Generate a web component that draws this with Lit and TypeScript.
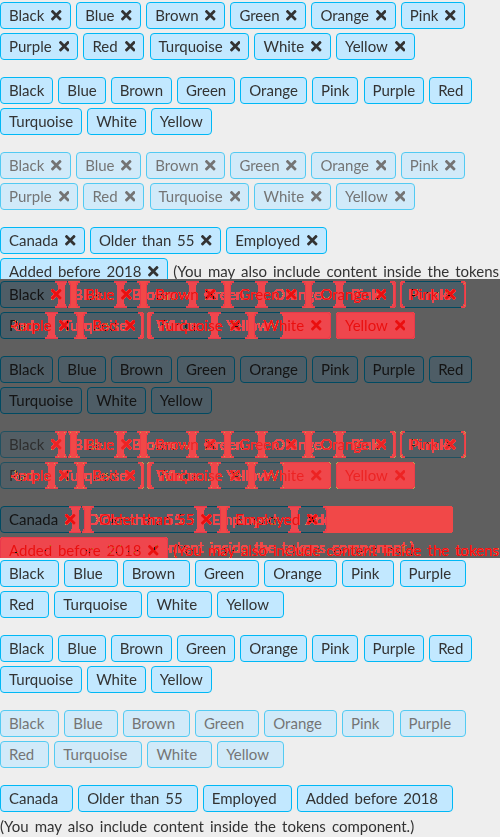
import { LitElement, html, css } from 'lit';
import { customElement } from 'lit/decorators.js';

const COLORS = ['Black', 'Blue', 'Brown', 'Green', 'Orange', 'Pink', 'Purple', 'Red', 'Turquoise', 'White', 'Yellow'];
const FILTERS = ['Canada', 'Older than 55', 'Employed', 'Added before 2018'];
const NOTE = '(You may also include content inside the tokens component.)';

const closeIcon = html`<svg class="close" viewBox="0 80 352 352" aria-hidden="true"><path d="M242.72 256l100.07-100.07c12.28-12.28 12.28-32.19 0-44.48l-22.24-22.24c-12.28-12.28-32.19-12.28-44.48 0L176 189.28 75.93 89.21c-12.28-12.28-32.19-12.28-44.48 0L9.21 111.45c-12.28 12.28-12.28 32.19 0 44.48L109.28 256 9.21 356.07c-12.28 12.28-12.28 32.19 0 44.48l22.24 22.24c12.28 12.28 32.2 12.28 44.48 0L176 322.72l100.07 100.07c12.28 12.28 32.2 12.28 44.48 0l22.24-22.24c12.28-12.28 12.28-32.19 0-44.48L242.72 256z"/></svg>`;

@customElement('app-root')
export class AppRoot extends LitElement {
   static styles = css`
   :host {
      display: block;
      width: 500px;
      background: #eeeeee;
      color: #333333;
      font-family: 'Lato', 'Liberation Sans', sans-serif;
      font-size: 15px;
   }
   .panel {
      position: relative;
      height: 279px;
      overflow: hidden;
      background: #eeeeee;
   }
   .group {
      line-height: 25px;
      margin-bottom: 13px;
   }
   .token {
      display: inline-block;
      margin: 2px 1.2px 2px 0;
      padding: 0 8px;
      border: 1px solid #00b8f5;
      border-radius: 4px;
      background: #c2e8ff;
      white-space: nowrap;
      word-spacing: 2px;
   }
   .disabled .token {
      opacity: 0.65;
   }
   .close {
      display: inline-block;
      width: 10.5px;
      height: 10.5px;
      margin-left: 6.9px;
      margin-right: 0.4px;
      fill: #333333;
      vertical-align: 0.2px;
   }
   .spacer {
      display: inline-block;
      width: 6px;
   }
   .note {
      word-spacing: 2.2px;
   }
   .note.own-line {
      display: block;
   }
   .dim {
      position: absolute;
      inset: 0;
      background: rgba(0, 0, 0, 0.6);
   }
   .mask {
      position: absolute;
      inset: 0;
      filter: url(#pixel-diff);
      mix-blend-mode: hard-light;
   }
   .sheet {
      position: absolute;
      inset: 0;
      overflow: hidden;
      background: #eeeeee;
   }
   .sheet.over {
      mix-blend-mode: difference;
   }
   .defs {
      position: absolute;
      width: 0;
      height: 0;
   }
`;

   private token(label: string, removable: boolean) {
      return html`<span class="token">${label}${removable ? closeIcon : ''}</span> `;
   }

   private spacedToken(label: string, removable: boolean) {
      return html`<span class="token">${label}${removable ? html`<span class="spacer"></span>` : ''}</span> `;
   }

   private before() {
      return html`
         <div class="group">${COLORS.map((c) => this.token(c, true))}</div>
         <div class="group">${COLORS.map((c) => this.token(c, false))}</div>
         <div class="group disabled">${COLORS.map((c) => this.token(c, true))}</div>
         <div class="group">${FILTERS.map((c) => this.token(c, true))}<span class="note">${NOTE}</span></div>
      `;
   }

   private after() {
      return html`
         <div class="group">${COLORS.map((c) => this.spacedToken(c, true))}</div>
         <div class="group">${COLORS.map((c) => this.spacedToken(c, false))}</div>
         <div class="group disabled">${COLORS.map((c) => this.spacedToken(c, true))}</div>
         <div class="group">${FILTERS.map((c) => this.spacedToken(c, true))}<span class="note own-line">${NOTE}</span></div>
      `;
   }

   render() {
      return html`
         <svg class="defs" aria-hidden="true">
            <filter id="pixel-diff" x="0" y="0" width="100%" height="100%" color-interpolation-filters="sRGB">
               <feColorMatrix type="matrix" values="1 1 1 0 0  1 1 1 0 0  1 1 1 0 0  1 1 1 0 0"></feColorMatrix>
               <feComponentTransfer>
                  <feFuncR type="discrete" tableValues="0 0.82 0.96 0.96 0.96 0.96 0.96 0.96 0.96 0.96 0.96 0.96 0.96 0.96 0.96 0.96 0.96 0.96 0.96 0.96"></feFuncR>
                  <feFuncG type="discrete" tableValues="0 0.72 0.38 0.38 0.38 0.38 0.38 0.38 0.38 0.38 0.38 0.38 0.38 0.38 0.38 0.38 0.38 0.38 0.38 0.38"></feFuncG>
                  <feFuncB type="discrete" tableValues="0 0.4 0.38 0.38 0.38 0.38 0.38 0.38 0.38 0.38 0.38 0.38 0.38 0.38 0.38 0.38 0.38 0.38 0.38 0.38"></feFuncB>
                  <feFuncA type="discrete" tableValues="0 1 1 1 1 1 1 1 1 1 1 1 1 1 1 1 1 1 1 1"></feFuncA>
               </feComponentTransfer>
            </filter>
         </svg>
         <section class="panel">${this.before()}</section>
         <section class="panel">
            ${this.before()}
            <div class="dim"></div>
            <div class="mask">
               <div class="sheet">${this.before()}</div>
               <div class="sheet over">${this.after()}</div>
            </div>
         </section>
         <section class="panel">${this.after()}</section>
      `;
   }
}
